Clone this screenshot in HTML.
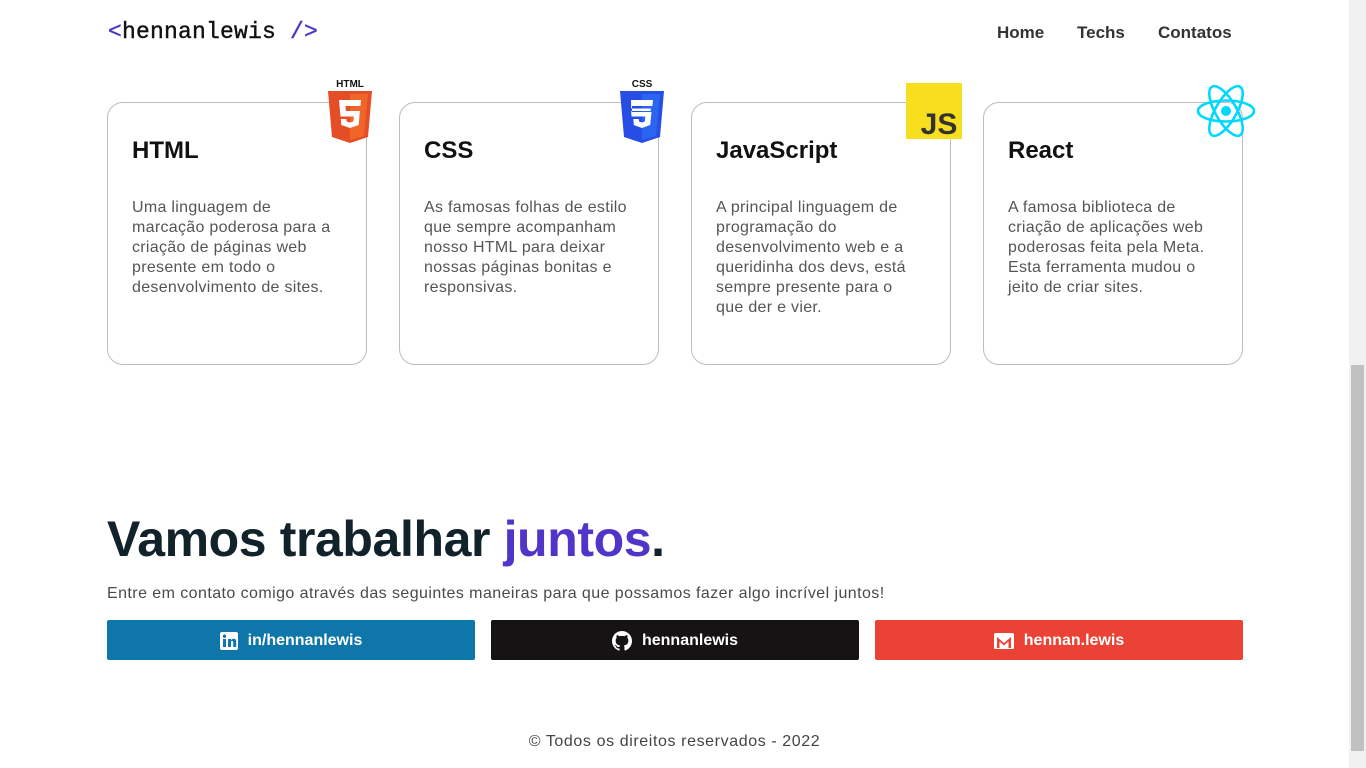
<!DOCTYPE html>
<html><head><meta charset="utf-8"><style>
*{margin:0;padding:0;box-sizing:border-box}
body{width:1366px;height:768px;overflow:hidden;background:#fff;font-family:"Liberation Sans",sans-serif;position:relative}
.sb{position:absolute;right:0;top:0;width:17px;height:768px;background:#f1f1f1}
.sb div{position:absolute;left:2px;right:2px;top:365px;height:386px;background:#c1c1c1}
.logo{position:absolute;left:108px;top:19px;font-family:"Liberation Mono","DejaVu Sans Mono",monospace;font-size:23px;color:#111;letter-spacing:0.2px;-webkit-text-stroke:0.4px #111}
.logo span{color:#5035c8;-webkit-text-stroke:0.4px #5035c8}
nav{position:absolute;top:23px;font-weight:bold;font-size:17px;color:#333}
.card{position:absolute;top:102px;width:260px;height:263px;border:1px solid #bdbdbd;border-radius:16px}
.card h3{position:absolute;left:24px;top:34px;font-size:24px;color:#111}
.card p{position:absolute;left:24px;top:95px;width:208px;font-size:16px;line-height:20px;color:#555;letter-spacing:0.3px}
.ic{position:absolute}
h1{position:absolute;left:107px;top:510px;font-size:50px;color:#12222a;letter-spacing:-0.4px}
h1 span{color:#5035c8}
.sub{position:absolute;left:107px;top:585px;font-size:16px;color:#4a4a4a;letter-spacing:0.43px}
.btn{position:absolute;top:620px;width:368px;height:40px;padding-top:2px;color:#fff;font-size:16px;font-weight:bold;display:flex;align-items:center;justify-content:center;gap:10px;border-radius:2px}
.foot{position:absolute;top:733px;left:0;width:1349px;text-align:center;font-size:16px;color:#444;letter-spacing:0.6px}
</style></head><body>
<div class="logo"><span>&lt;</span>hennanlewis <span>/&gt;</span></div>
<nav style="left:997px">Home</nav><nav style="left:1077px">Techs</nav><nav style="left:1158px">Contatos</nav>

<div class="card" style="left:107px"><h3>HTML</h3><p>Uma linguagem de marcação poderosa para a criação de páginas web presente em todo o desenvolvimento de sites.</p></div>
<div class="card" style="left:399px"><h3>CSS</h3><p>As famosas folhas de estilo que sempre acompanham nosso HTML para deixar nossas páginas bonitas e responsivas.</p></div>
<div class="card" style="left:691px"><h3>JavaScript</h3><p>A principal linguagem de programação do desenvolvimento web e a queridinha dos devs, está sempre presente para o que der e vier.</p></div>
<div class="card" style="left:983px"><h3>React</h3><p>A famosa biblioteca de criação de aplicações web poderosas feita pela Meta. Esta ferramenta mudou o jeito de criar sites.</p></div>

<svg class="ic" style="left:326px;top:78px" width="48" height="66" viewBox="0 0 48 66">
<text x="24" y="9" text-anchor="middle" font-family="Liberation Sans" font-weight="bold" font-size="10" fill="#111">HTML</text>
<path d="M2 13h44l-4 46-18 6-18-6z" fill="#e44d26"/><path d="M24 16v46l14-4 4-42z" fill="#f16529"/>
<path d="M13 22h22l-.6 6H19.5l.4 5h14l-1.2 14-8.7 3-8.7-3-.5-6h5.5l.3 2.5 3.4 1 3.4-1 .4-5H14.5z" fill="#fff"/></svg>
<svg class="ic" style="left:618px;top:78px" width="48" height="66" viewBox="0 0 48 66">
<text x="24" y="9" text-anchor="middle" font-family="Liberation Sans" font-weight="bold" font-size="10" fill="#111">CSS</text>
<path d="M2 13h44l-4 46-18 6-18-6z" fill="#264de4"/><path d="M24 16v46l14-4 4-42z" fill="#2965f1"/>
<path d="M13 22h22l-.6 6H14v6h19.5l-1.3 13-8.2 3-8.2-3-.5-6h5.5l.3 2.5 2.9 1 2.9-1 .4-5H13.5l-.3-5.5h19.5l.2-2.5H13.2z" fill="#fff"/></svg>
<svg class="ic" style="left:906px;top:83px" width="56" height="56" viewBox="0 0 56 56"><rect width="56" height="56" fill="#f7df1e"/>
<text x="33" y="51" text-anchor="middle" font-family="Liberation Sans" font-weight="bold" font-size="30" fill="#323330">JS</text></svg>
<svg class="ic" style="left:1196px;top:82px" width="60" height="58" viewBox="-30 -29 60 58" fill="none" stroke="#00d8ff" stroke-width="2.6">
<ellipse rx="28" ry="10.5"/><ellipse rx="28" ry="10.5" transform="rotate(60)"/><ellipse rx="28" ry="10.5" transform="rotate(120)"/><circle r="5" fill="#00d8ff" stroke="none"/></svg>

<h1>Vamos trabalhar <span>juntos</span>.</h1>
<div class="sub">Entre em contato comigo através das seguintes maneiras para que possamos fazer algo incrível juntos!</div>
<div class="btn" style="left:107px;background:#0e76a8"><svg width="18" height="18" viewBox="0 0 18 18"><rect width="18" height="18" rx="2" fill="#fff"/><rect x="3" y="7" width="3" height="8" fill="#0e76a8"/><circle cx="4.5" cy="4.2" r="1.7" fill="#0e76a8"/><path d="M8 7h3v1.3c.6-1 1.6-1.5 2.7-1.5 2 0 2.5 1.3 2.5 3V15h-3v-4.5c0-1-.3-1.6-1.2-1.6S11 9.6 11 10.6V15H8z" fill="#0e76a8"/></svg>in/hennanlewis</div>
<div class="btn" style="left:491px;background:#151313"><svg width="20" height="20" viewBox="0 0 16 16"><path fill="#fff" d="M8 0C3.58 0 0 3.58 0 8c0 3.54 2.29 6.53 5.47 7.59.4.07.55-.17.55-.38v-1.33c-2.23.48-2.7-1.07-2.7-1.07-.36-.92-.89-1.17-.89-1.17-.73-.5.05-.49.05-.49.81.06 1.23.83 1.23.83.72 1.22 1.88.87 2.34.67.07-.52.28-.87.51-1.07-1.78-.2-3.64-.89-3.64-3.95 0-.87.31-1.59.82-2.15-.08-.2-.36-1.02.08-2.12 0 0 .67-.21 2.2.82A7.6 7.6 0 0 1 8 3.89c.68 0 1.36.09 2 .27 1.53-1.04 2.2-.82 2.2-.82.44 1.1.16 1.92.08 2.12.51.56.82 1.27.82 2.15 0 3.07-1.87 3.75-3.65 3.95.29.25.54.73.54 1.48v2.2c0 .21.15.46.55.38A8.01 8.01 0 0 0 16 8c0-4.42-3.58-8-8-8z"/></svg>hennanlewis</div>
<div class="btn" style="left:875px;background:#ea4335"><svg width="20" height="16" viewBox="0 0 20 16"><rect width="20" height="16" rx="1.5" fill="#fff"/><path d="M3 15V4l7 6 7-6v11h-2.5V8.5L10 12.5 5.5 8.5V15z" fill="#ea4335"/></svg>hennan.lewis</div>
<div class="foot">© Todos os direitos reservados - 2022</div>
<div class="sb"><div></div></div>
</body></html>
